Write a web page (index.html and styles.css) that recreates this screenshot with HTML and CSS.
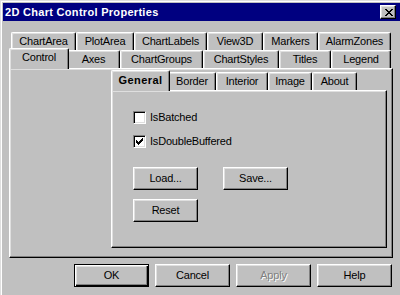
FILE: index.html
```html
<!DOCTYPE html>
<html>
<head>
<meta charset="utf-8">
<title>2D Chart Control Properties</title>
<link rel="stylesheet" href="styles.css">
</head>
<body>
<div class="window">
  <div class="titlebar">
    <span class="title">2D Chart Control Properties</span>
    <button class="close" type="button" aria-label="Close">
      <svg width="8" height="7" viewBox="0 0 8 7" shape-rendering="crispEdges"><path d="M0 0h2v1h-2z M6 0h2v1h-2z M1 1h2v1h-2z M5 1h2v1h-2z M2 2h4v1h-4z M3 3h2v1h-2z M2 4h4v1h-4z M1 5h2v1h-2z M5 5h2v1h-2z M0 6h2v1h-2z M6 6h2v1h-2z"/></svg>
    </button>
  </div>
  <div class="content">
    <div class="tabctl outer">
      <div class="tabrow row1">
        <div class="tab">ChartArea</div>
        <div class="tab">PlotArea</div>
        <div class="tab">ChartLabels</div>
        <div class="tab">View3D</div>
        <div class="tab">Markers</div>
        <div class="tab">AlarmZones</div>
      </div>
      <div class="tabrow row2">
        <div class="tab sel">Control</div>
        <div class="tab">Axes</div>
        <div class="tab">ChartGroups</div>
        <div class="tab">ChartStyles</div>
        <div class="tab">Titles</div>
        <div class="tab">Legend</div>
      </div>
      <div class="panel outer-panel">
        <div class="tabctl inner">
          <div class="tabrow row3">
            <div class="tab sel bold">General</div>
            <div class="tab">Border</div>
            <div class="tab">Interior</div>
            <div class="tab">Image</div>
            <div class="tab">About</div>
          </div>
          <div class="panel inner-panel">
            <div class="check"><span class="box"></span><span>IsBatched</span></div>
            <div class="check"><span class="box"><svg width="7" height="7" viewBox="0 0 7 7" shape-rendering="crispEdges"><path d="M6 0h1v1h-1z M5 1h2v1h-2z M0 2h1v1h-1z M4 2h3v1h-3z M0 3h2v1h-2z M3 3h3v1h-3z M0 4h5v1h-5z M1 5h3v1h-3z M2 6h1v1h-1z"/></svg></span><span>IsDoubleBuffered</span></div>
            <div class="btnrow first">
              <button class="btn small" type="button">Load...</button>
              <button class="btn small" type="button">Save...</button>
            </div>
            <div class="btnrow">
              <button class="btn small" type="button">Reset</button>
            </div>
          </div>
        </div>
      </div>
    </div>
    <div class="buttons">
      <button class="btn wide default" type="button">OK</button>
      <button class="btn wide" type="button">Cancel</button>
      <button class="btn wide disabled" type="button">Apply</button>
      <button class="btn wide" type="button">Help</button>
    </div>
  </div>
</div>
</body>
</html>
```

FILE: styles.css
```css
* { box-sizing: border-box; }
html, body { margin: 0; padding: 0; }
body {
  background: #c0c0c0;
  width: 400px;
  height: 295px;
  overflow: hidden;
  font-family: "Liberation Sans", Arial, sans-serif;
  font-size: 11px;
  letter-spacing: -0.2px;
  color: #000;
}
.window {
  width: 404px;
  height: 300px;
  padding: 3px 0 0 3px;
  box-shadow: inset 1px 1px #dfdfdf, inset 2px 2px #fff;
}
.titlebar {
  width: 397px;
  height: 18px;
  background: #000080;
  display: flex;
  align-items: center;
  justify-content: space-between;
  padding: 0 4px 0 2px;
  color: #fff;
  font-weight: bold;
  letter-spacing: 0.3px;
  line-height: 13px;
}
.close {
  width: 16px;
  height: 14px;
  padding: 0 0 0 1px;
  margin: 0;
  background: #c0c0c0;
  border: 1px solid;
  border-color: #fff #000 #000 #fff;
  box-shadow: inset -1px -1px #808080, inset 1px 1px #dfdfdf;
  display: flex;
  align-items: center;
  justify-content: center;
}
.close svg { display: block; }
.content { padding: 11px 0 0 6px; }
.tabctl.outer { width: 384px; }
.tabrow {
  display: grid;
  height: 18px;
  padding-left: 2px;
}
.row1 { grid-template-columns: 65px 58px 73px 56px 55px 73px; }
.row2 { grid-template-columns: 56px 53px 83px 76px 52px 60px; }
.row3 { grid-template-columns: 55px 48px 52px 44px 45px; }
.tab {
  background: #c0c0c0;
  border: 1px solid;
  border-bottom: 0;
  border-color: #fff #000 #000 #fff;
  border-radius: 2px 2px 0 0;
  box-shadow: inset -1px 0 #808080, inset 1px 1px #dfdfdf;
  text-align: center;
  padding-top: 2px;
  line-height: 13px;
  white-space: nowrap;
}
.tab.sel {
  margin: -2px -2px -1px -2px;
  position: relative;
  z-index: 1;
}
.tab.bold { font-weight: bold; letter-spacing: 0.4px; padding-top: 3px; }
.panel {
  border: 1px solid;
  border-color: #fff #000 #000 #fff;
  box-shadow: inset -1px -1px #808080, inset 1px 1px #dfdfdf;
}
.outer-panel {
  height: 190px;
  padding: 3px 0 0 101px;
}
.tabctl.inner { width: 276px; }
.inner-panel {
  height: 158px;
  padding: 20px 0 0 21px;
}
.check {
  display: flex;
  align-items: center;
  height: 13px;
  line-height: 13px;
  gap: 4px;
  margin-bottom: 11px;
}
.box {
  width: 13px;
  height: 13px;
  background: #fff;
  border: 1px solid;
  border-color: #808080 #fff #fff #808080;
  box-shadow: inset 1px 1px #000, inset -1px -1px #dfdfdf;
  display: flex;
  padding: 2px 0 0 2px;
}
.box svg { display: block; }
.btnrow { display: flex; gap: 25px; margin-top: 9px; }
.btnrow.first { margin-top: 19px; }
.btn {
  height: 23px;
  padding: 0;
  margin: 0;
  background: #c0c0c0;
  border: 1px solid;
  border-color: #fff #000 #000 #fff;
  box-shadow: inset -1px -1px #808080, inset 1px 1px #dfdfdf;
  font-family: inherit;
  font-size: 11px;
  letter-spacing: -0.2px;
  line-height: 13px;
  color: #000;
}
.btn.small { width: 65px; }
.btn.wide { width: 75px; }
.btn.default {
  border-color: #000;
  box-shadow: inset 1px 1px #fff, inset -1px -1px #000, inset -2px -2px #808080, inset 2px 2px #dfdfdf;
}
.btn.disabled { color: #808080; text-shadow: 1px 1px #fff; }
.buttons {
  width: 384px;
  display: flex;
  justify-content: flex-end;
  gap: 6px;
  padding-right: 1px;
  margin-top: 6px;
}
```
